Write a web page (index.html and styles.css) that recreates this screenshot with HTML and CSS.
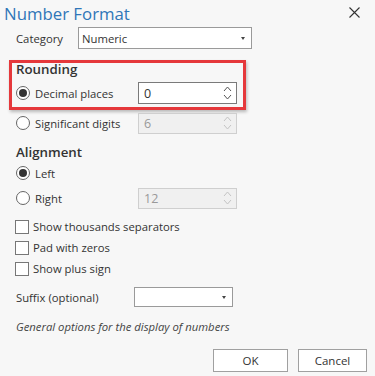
FILE: index.html
```html
<!DOCTYPE html>
<html lang="en">
<head>
    <meta charset="UTF-8">
    <meta name="viewport" content="width=device-width, initial-scale=1.0">
    <title>Number Format</title>
    <link rel="stylesheet" href="styles.css">
</head>
<body>
    <div class="dialog">
        <div class="titlebar">
            <span class="title">Number Format</span>
            <span class="close">
                <svg width="11" height="11" viewBox="0 0 11 11"><path d="M0.5 0.5 L10.5 10.5 M10.5 0.5 L0.5 10.5" stroke="#333" stroke-width="1.1" fill="none"/></svg>
            </span>
        </div>

        <div class="content">
            <div class="row category">
                <span class="label cat-label">Category</span>
                <div class="select cat-select">
                    <span>Numeric</span>
                    <span class="caret"></span>
                </div>
            </div>

            <div class="highlight">
                <div class="heading heading-in">Rounding</div>
                <div class="row opt">
                    <span class="radio checked"></span>
                    <span class="opt-label">Decimal places</span>
                    <div class="spin">
                        <span>0</span>
                        <svg class="arrows" width="9" height="18" viewBox="0 0 9 18"><path d="M1 7 L4.5 3 L8 7 M1 11 L4.5 15 L8 11" stroke="#555" stroke-width="1" fill="none"/></svg>
                    </div>
                </div>
            </div>

            <div class="row opt sig">
                <span class="radio"></span>
                <span class="opt-label">Significant digits</span>
                <div class="spin disabled">
                    <span>6</span>
                    <svg class="arrows" width="9" height="18" viewBox="0 0 9 18"><path d="M1 7 L4.5 3 L8 7 M1 11 L4.5 15 L8 11" stroke="#c4c4c4" stroke-width="1" fill="none"/></svg>
                </div>
            </div>

            <div class="heading heading-align">Alignment</div>
            <div class="row opt left">
                <span class="radio checked"></span>
                <span class="opt-label">Left</span>
            </div>
            <div class="row opt right">
                <span class="radio"></span>
                <span class="opt-label">Right</span>
                <div class="spin disabled">
                    <span>12</span>
                    <svg class="arrows" width="9" height="18" viewBox="0 0 9 18"><path d="M1 7 L4.5 3 L8 7 M1 11 L4.5 15 L8 11" stroke="#c4c4c4" stroke-width="1" fill="none"/></svg>
                </div>
            </div>

            <div class="checks">
                <div class="row check"><span class="box"></span>Show thousands separators</div>
                <div class="row check"><span class="box"></span>Pad with zeros</div>
                <div class="row check"><span class="box"></span>Show plus sign</div>
            </div>

            <div class="row suffix">
                <span class="label suffix-label">Suffix (optional)</span>
                <div class="select suffix-select">
                    <span></span>
                    <span class="caret"></span>
                </div>
            </div>

            <p class="hint">General options for the display of numbers</p>

            <div class="buttons">
                <button class="btn ok">OK</button>
                <button class="btn cancel">Cancel</button>
            </div>
        </div>
    </div>
</body>
</html>
```

FILE: styles.css
```css
body {
    margin: 0;
    background-color: #f7f7f7;
    font-family: "Segoe UI", "Open Sans", Arial, sans-serif;
    font-size: 11.3px;
    color: #333;
}
.dialog {
    width: 375px;
    height: 376px;
}
.titlebar {
    height: 27px;
    display: flex;
    align-items: center;
    justify-content: space-between;
    padding: 0 15px 0 4px;
}
.title {
    font-size: 16.8px;
    color: #2f76b8;
}
.close {
    display: flex;
    margin-top: -2px;
}
.content {
    padding-left: 16px;
}
.row {
    display: flex;
    align-items: center;
}
.category {
    height: 22px;
}
.label {
    flex: none;
}
.cat-label {
    width: 62px;
}
.select {
    box-sizing: border-box;
    display: flex;
    align-items: center;
    justify-content: space-between;
    background-color: #fff;
    border: 1px solid #9a9a9a;
    padding: 0 6px 0 3px;
}
.cat-select {
    width: 174px;
    height: 22px;
}
.caret {
    width: 0;
    height: 0;
    border-left: 2.5px solid transparent;
    border-right: 2.5px solid transparent;
    border-top: 3px solid #444;
}
.highlight {
    width: 221px;
    margin: 11px 0 0 -7px;
    padding: 0 6px 3px 4px;
    border: 3px solid #e5383b;
    box-shadow: 1px 2px 3px rgba(0, 0, 0, 0.25);
}
.heading {
    font-size: 13.3px;
    font-weight: 600;
    color: #333;
}
.heading-in {
    height: 16px;
    line-height: 12px;
}
.opt {
    height: 22px;
}
.highlight .opt {
    margin-top: 3px;
}
.radio {
    box-sizing: border-box;
    width: 14px;
    height: 14px;
    border: 1px solid #666;
    border-radius: 50%;
    background-color: #fff;
    margin-right: 5px;
    display: flex;
    align-items: center;
    justify-content: center;
    flex: none;
}
.radio.checked::after {
    content: "";
    width: 8px;
    height: 8px;
    border-radius: 50%;
    background-color: #333;
}
.opt-label {
    width: 103px;
    flex: none;
}
.spin {
    box-sizing: border-box;
    width: 99px;
    height: 22px;
    border: 1px solid #7a7a7a;
    background-color: #fff;
    display: flex;
    align-items: center;
    justify-content: space-between;
    padding: 0 4px 0 5px;
    font-size: 12.5px;
}
.spin.disabled {
    border-color: #cfcfcf;
    background-color: #f0f0f0;
    color: #999;
    height: 21px;
}
.sig {
    margin-top: 2px;
}
.heading-align {
    height: 18px;
    line-height: 18px;
    margin-top: 9px;
}
.left {
    height: 20px;
    margin-top: 2px;
}
.right {
    margin-top: 4px;
}
.checks {
    margin-top: 7px;
}
.check {
    height: 21px;
}
.box {
    box-sizing: border-box;
    width: 14px;
    height: 14px;
    border: 1px solid #777;
    background-color: #fff;
    margin: 0 4px 0 -1px;
}
.suffix {
    height: 20px;
    margin-top: 8px;
}
.suffix-label {
    width: 118px;
}
.suffix-select {
    width: 99px;
    height: 20px;
}
.hint {
    margin: 11px 0 0;
    height: 18px;
    line-height: 18px;
    font-style: italic;
    color: #444;
}
.buttons {
    display: flex;
    justify-content: flex-end;
    gap: 10px;
    margin-top: 13px;
    padding-right: 8px;
}
.btn {
    height: 23px;
    background-color: #fff;
    border: 1px solid #a0a0a0;
    font-family: inherit;
    font-size: 11.5px;
    color: #333;
    padding: 0;
}
.ok {
    width: 75px;
}
.cancel {
    width: 69px;
}
```
